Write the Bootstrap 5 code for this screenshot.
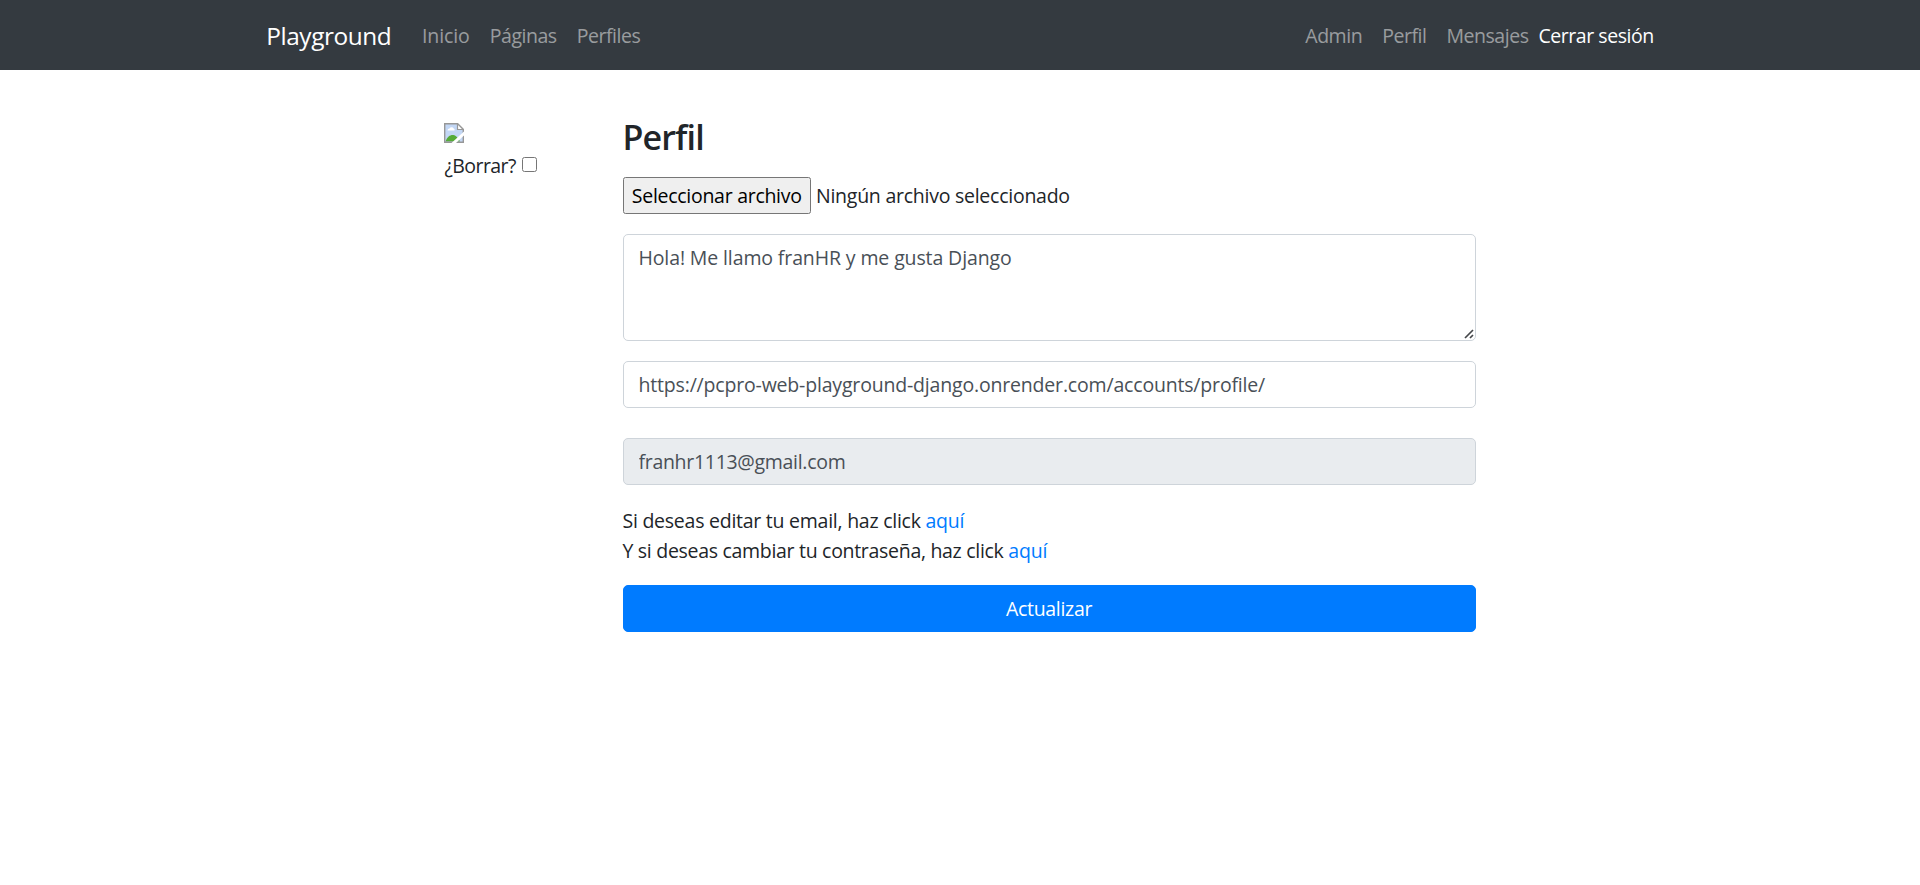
<!DOCTYPE html>
<html lang="es">
<head>
<meta charset="utf-8">
<meta name="viewport" content="width=device-width, initial-scale=1">
<title>Perfil | Playground</title>
<link href="https://cdn.jsdelivr.net/npm/bootstrap@5.3.0/dist/css/bootstrap.min.css" rel="stylesheet">
<script src="https://cdn.jsdelivr.net/npm/bootstrap@5.3.0/dist/js/bootstrap.bundle.min.js" defer></script>
<style>
html{font-size:20px}
body{font-family:"Open Sans",sans-serif;font-size:19.5px;line-height:30px;color:#212529;letter-spacing:-.25px}
.container{max-width:1425px;--bs-gutter-x:37.5px}
.row{--bs-gutter-x:37.5px}
/* navigation */
.top-nav{background:#343a40;height:70px}
.navbar-brand{font-size:24.4px;line-height:37px;margin-right:20.5px;letter-spacing:-.42px}
.top-nav .nav-link{color:rgba(255,255,255,.5);padding:11px 10px 9px;letter-spacing:-.46px}
.top-nav .nav-link.ls-wide{letter-spacing:-.08px}
.top-nav .nav-link.logout{color:#fff;padding-left:0;padding-right:0}
/* profile form */
.page-body{padding-top:45px}
.avatar{padding-top:8px}
.avatar svg{display:block;margin-bottom:8px}
.avatar label{letter-spacing:-.55px}
.tick{width:15px;height:15px;margin:-4px 0 0 6px}
.title{font-size:34px;line-height:42px;font-weight:600;letter-spacing:-.85px;padding-top:1px;margin-bottom:19px}
.file-row{height:37px;margin-bottom:20px;gap:5px;letter-spacing:-.25px}
.file-btn{font:inherit;letter-spacing:-.28px;color:#000;background:#efefef;border:1px solid #767676;border-radius:2.5px;width:188.5px;height:37px;padding:0;line-height:35px}
.form-control{font-size:19.5px;line-height:30px;padding:7.5px 15px;border-color:#ced4da;border-radius:5px;color:#495057;height:47px}
.bio{margin-bottom:20px}
.bio textarea{height:107px;letter-spacing:-.12px;resize:none}
.grip{right:2px;bottom:2px}
.url-field{letter-spacing:-.18px;margin-bottom:30px}
.mail-field{letter-spacing:-.3px}
.form-control:disabled{background:#e9ecef}
.hints{margin:21px 0 19px}
.hints .second{letter-spacing:-.3px}
.hints a{color:#007bff;text-decoration:none;letter-spacing:-.2px}
.btn-update,.btn-update:hover{background:#007bff;border-color:#007bff;color:#fff;font-size:19.5px;letter-spacing:-.32px;height:47px;line-height:30px;padding:7.5px;border-radius:5px}
</style>
</head>
<body>
<nav class="navbar navbar-expand top-nav p-0">
  <div class="container">
    <a class="navbar-brand text-white" href="#">Playground</a>
    <ul class="navbar-nav me-auto">
      <li class="nav-item"><a class="nav-link ls-wide" href="#">Inicio</a></li>
      <li class="nav-item"><a class="nav-link" href="#">Páginas</a></li>
      <li class="nav-item"><a class="nav-link" href="#">Perfiles</a></li>
    </ul>
    <ul class="navbar-nav">
      <li class="nav-item"><a class="nav-link" href="#">Admin</a></li>
      <li class="nav-item"><a class="nav-link" href="#">Perfil</a></li>
      <li class="nav-item"><a class="nav-link" href="#">Mensajes</a></li>
      <li class="nav-item"><a class="nav-link logout" href="#">Cerrar sesión</a></li>
    </ul>
  </div>
</nav>
<main class="container page-body">
  <form class="row">
    <div class="col-9 mx-auto">
      <div class="row">
        <div class="col-2">
          <div class="avatar">
            <svg width="20" height="20" viewBox="0 0 20 20" aria-hidden="true">
              <path d="M1 1h12.500L19 6.500V19H1z" fill="#c3d7f5"/>
              <path d="M3.500 7.500a2 2 0 0 1 2-2 2.300 2.300 0 0 1 4.200 0 1.500 1.500 0 0 1 .8 2z" fill="#fff"/>
              <path d="M1.500 18.500C3 14 6 12 8.500 12c2.500 0 5 1.500 7.500 6.500z" fill="#55ab38"/>
              <path d="M.7.700h12.800l5.800 5.800v12.800H.7z" fill="none" stroke="#979797" stroke-width="1.400"/>
              <path d="M13.500.7v5.800h5.800z" fill="#fff" stroke="#979797" stroke-width="1.200"/>
              <path d="M20 8.500V12.500L12 20H7.500z" fill="#fff"/>
            </svg>
            <div class="d-flex align-items-center"><label for="clear">¿Borrar?</label><input class="tick" type="checkbox" id="clear"></div>
          </div>
        </div>
        <div class="col-10">
          <h3 class="title">Perfil</h3>
          <div class="file-row d-flex align-items-center">
            <button class="file-btn" type="button">Seleccionar archivo</button>
            <span class="text-nowrap">Ningún archivo seleccionado</span>
          </div>
          <div class="bio position-relative">
            <textarea class="form-control" rows="3">Hola! Me llamo franHR y me gusta Django</textarea>
            <svg class="grip position-absolute" width="10" height="10" viewBox="0 0 10 10" aria-hidden="true"><path d="M1 9L9 1M6 9l3-3" fill="none" stroke="#45474a" stroke-width="1.700"/></svg>
          </div>
          <input class="form-control url-field" type="text" value="https://pcpro-web-playground-django.onrender.com/accounts/profile/">
          <input class="form-control mail-field" type="email" value="franhr1113@gmail.com" disabled>
          <p class="hints">Si deseas editar tu email, haz click <a href="#">aquí</a><br><span class="second">Y si deseas cambiar tu contraseña, haz click <a href="#">aquí</a></span></p>
          <button class="btn btn-update w-100" type="button">Actualizar</button>
        </div>
      </div>
    </div>
  </form>
</main>
</body>
</html>
